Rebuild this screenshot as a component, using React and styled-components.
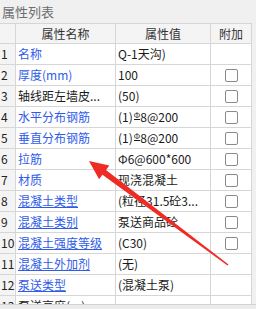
import React from 'react';
import styled, { createGlobalStyle } from 'styled-components';

const Global = createGlobalStyle`
  html, body { margin: 0; padding: 0; background: #f0f0f0; }
  body { font-family: "Noto Sans CJK SC", "Microsoft YaHei", sans-serif; }
`;

const Panel = styled.div`
  position: relative;
  width: 256px;
  height: 309px;
  overflow: hidden;
  display: flex;
  flex-direction: column;
  background: #f0f0f0;
`;

const Title = styled.div`
  flex: none;
  height: 23px;
  padding-left: 2px;
  font-size: 13px;
  line-height: 23px;
  color: #6e6e6e;
`;

const TableArea = styled.div`
  flex: 1;
  overflow: hidden;
  display: flex;
`;

const Grid = styled.div`
  display: grid;
  grid-template-columns: 16px 100px 95px 41px;
  grid-template-rows: 20px;
  grid-auto-rows: 21px;
  align-content: start;
  height: max-content;
  border-top: 1px solid #d6d6d6;
  background: #fff;
`;

const BaseCell = styled.div`
  box-sizing: border-box;
  border-right: 1px solid #d6d6d6;
  border-bottom: 1px solid #d6d6d6;
  font-size: 12px;
  line-height: 20px;
  white-space: nowrap;
  overflow: hidden;
`;

const HeaderCell = styled(BaseCell)`
  background: #f4f4f4;
  color: #333;
  text-align: center;
  line-height: 19px;
`;

const NumCell = styled(BaseCell)`
  background: #f4f4f4;
  color: #222;
  padding-left: 1px;
`;

const NameCell = styled(BaseCell)`
  padding-left: 2px;
  color: ${p => (p.$public ? '#2f5be8' : '#1a1a1a')};
  & > span {
    text-decoration: ${p => (p.$underline ? 'underline' : 'none')};
    text-underline-offset: 1px;
  }
`;

const ValueCell = styled(BaseCell)`
  padding-left: 2px;
  color: #1a1a1a;
`;

const CheckCell = styled(BaseCell)`
  display: flex;
  align-items: center;
  justify-content: center;
`;

const Checkbox = styled.span`
  box-sizing: border-box;
  width: 13px;
  height: 13px;
  border: 1px solid #8a8a8a;
  border-radius: 2px;
  background: #fff;
`;

const Rebar = styled.span`
  display: inline-block;
  font-size: 8px;
  line-height: 8px;
  vertical-align: 4px;
  border-bottom: 1px solid #1a1a1a;
  margin: 0 0 0 1px;
`;

const BottomBar = styled.div`
  flex: none;
  height: 5px;
  box-sizing: border-box;
  border-top: 1px solid #d2d2d2;
  background: #ebebeb;
`;

const Overlay = styled.svg`
  position: absolute;
  left: 0;
  top: 0;
  pointer-events: none;
`;

const rows = [
  { name: '名称', value: 'Q-1天沟)', pub: true, check: false },
  { name: '厚度(mm)', value: '100', pub: true, check: true },
  { name: '轴线距左墙皮...', value: '(50)', pub: false, check: true },
  { name: '水平分布钢筋', value: <>(1)<Rebar>Φ</Rebar>8@200</>, pub: true, check: true },
  { name: '垂直分布钢筋', value: <>(1)<Rebar>Φ</Rebar>8@200</>, pub: true, check: true },
  { name: '拉筋', value: 'Φ6@600*600', pub: true, check: true },
  { name: '材质', value: '现浇混凝土', pub: true, check: true },
  { name: '混凝土类型', value: '(粒径31.5砼3...', pub: true, ul: true, check: true },
  { name: '混凝土类别', value: '泵送商品砼', pub: true, ul: true, check: true },
  { name: '混凝土强度等级', value: '(C30)', pub: true, ul: true, check: true },
  { name: '混凝土外加剂', value: '(无)', pub: true, ul: true, check: false },
  { name: '泵送类型', value: '(混凝土泵)', pub: true, ul: true, check: false },
  { name: '泵送高度(m)', value: '', pub: false, check: false },
];

export default function App() {
  return (
    <Panel>
      <Global />
      <Title>属性列表</Title>
      <TableArea>
        <Grid>
          <HeaderCell />
          <HeaderCell>属性名称</HeaderCell>
          <HeaderCell>属性值</HeaderCell>
          <HeaderCell>附加</HeaderCell>
          {rows.map((r, i) => (
            <React.Fragment key={i}>
              <NumCell>{i + 1}</NumCell>
              <NameCell $public={r.pub} $underline={r.ul}>
                <span>{r.name}</span>
              </NameCell>
              <ValueCell>{r.value}</ValueCell>
              <CheckCell>{r.check && <Checkbox />}</CheckCell>
            </React.Fragment>
          ))}
        </Grid>
      </TableArea>
      <BottomBar />
      <Overlay width="256" height="309" viewBox="0 0 256 309">
        <polygon
          points="89,161 109.3,165.6 106,170 228.5,264.4 227.5,265.6 102.4,174.8 99.1,179.2"
          fill="#ee2b25"
        />
      </Overlay>
    </Panel>
  );
}
